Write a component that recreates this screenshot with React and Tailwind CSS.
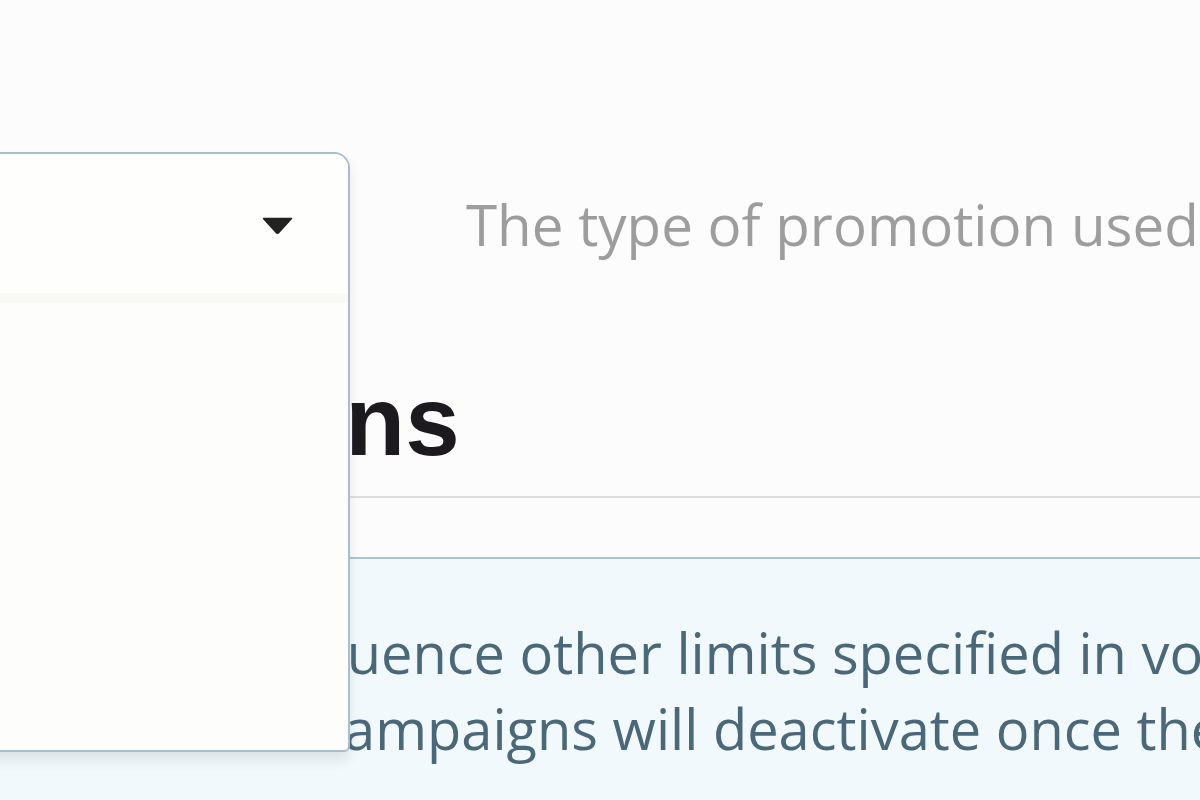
import React from 'react'

const Caret = () => (
  <svg width="31" height="18" viewBox="0 0 31 18" className="mt-[4px]">
    <path d="M1.5 1.5 L29.5 1.5 L16.8 15.6 Q15.5 17 14.2 15.6 Z" fill="#222" stroke="#222" strokeWidth="1.5" strokeLinejoin="round" />
  </svg>
)

const PromotionSelect = () => (
  <div className="relative w-[350px] h-[145px] shrink-0">
    {/* open menu */}
    <div className="absolute top-0 left-[-20px] w-[370px] h-[600px] z-10 flex flex-col rounded-tr-[16px] rounded-br-[6px] border-2 border-[#a7bfcc] bg-[#fdfdfb] shadow-[0_8px_12px_rgba(60,70,80,0.12)]">
      <div className="h-[139px] flex items-center justify-end pr-[55px] bg-[#fefefd] rounded-tr-[14px]">
        <Caret />
      </div>
      <div className="h-[10px] bg-[#f8f8f4]" />
      <div className="flex-1" />
    </div>
  </div>
)

export default function App() {
  return (
    <div className="relative w-[1200px] h-[800px] overflow-hidden bg-[#fcfcfd] font-['Open_Sans',sans-serif]">
      <div className="pt-[152px]">
        <div className="flex items-center">
          <PromotionSelect />
          <p className="ml-[116px] whitespace-nowrap text-[56.5px] leading-[76px] text-[#9d9d9d]">
            The type of promotion used
          </p>
        </div>

        <h2 className="mt-[75px] ml-[-63px] pb-[26px] whitespace-nowrap font-['Liberation_Sans',Arial,sans-serif] text-[98px] leading-none font-bold text-[#1c1a1f]">
          Limitations
        </h2>
        <div className="h-[2px] bg-[#dedede]" />

        <div className="mt-[59px] border-t-2 border-[#a8c5d1] bg-[#f2f9fc] pt-[55px] pb-[40px] text-[56px] leading-[76px] text-[#4a6878] whitespace-nowrap">
          <span className="block ml-[22px]">does not influence other limits specified in voucher</span>
          <span className="block ml-[203px]">and campaigns will deactivate once the limit is reached</span>
        </div>
      </div>
    </div>
  )
}
